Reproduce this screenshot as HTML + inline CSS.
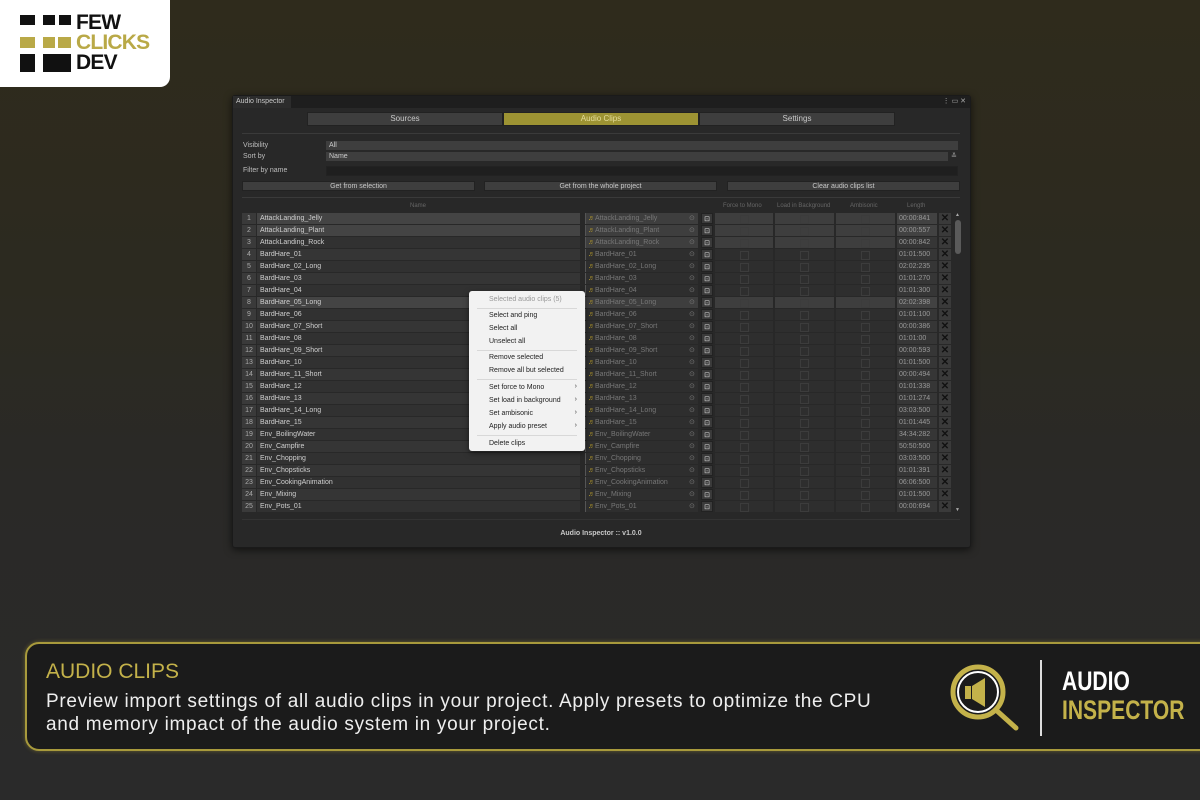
<!DOCTYPE html>
<html><head><meta charset="utf-8">
<style>
*{margin:0;padding:0;box-sizing:border-box}
body{width:1200px;height:800px;overflow:hidden;position:relative;font-family:"Liberation Sans",sans-serif;
background:linear-gradient(180deg,#2f2b1c 0%,#2c2a20 35%,#2a2927 60%,#2a2a2a 100%);}
.abs{position:absolute}
.logo{left:0;top:0;width:170px;height:87px;background:#fff;border-bottom-right-radius:10px}
.win{left:232px;top:95px;width:739px;height:453px;background:#282828;border:1px solid #1a1a1a;border-radius:3px;box-shadow:0 2px 8px rgba(0,0,0,.6)}
.t{font-size:7px;color:#bdbdbd;white-space:nowrap}
.btn{background:#3e3e3e;border:1px solid #222;text-align:center;font-size:7px;color:#c8c8c8;line-height:9px}
.r{position:absolute;left:242px;width:710px;height:11px}
.r div{position:absolute;top:0;height:11px;font-size:7px;line-height:11px;white-space:nowrap;overflow:hidden}
.i{left:0;width:14px;background:#3a3a3a;text-align:center;color:#aaa}
.n{left:15px;width:323px;background:#313131;padding-left:3px;color:#cfcfcf}
.a{left:343px;width:113px;background:#2e2e2e;border-left:1px solid #555;color:#777;padding-left:2px}
.a b{color:#b59a2a;font-weight:normal}
.o{left:447px;width:8px;color:#777}
.p{left:459px;width:12px;background:#3a3a3a;border:1px solid #222;color:#ddd;text-align:center}
.f1,.f2,.f3{background:#2e2e2e}
.f1{left:473px;width:58px}.f2{left:533px;width:59px}.f3{left:594px;width:59px}
.f1:after,.f2:after,.f3:after{content:"";position:absolute;left:25px;top:2px;width:7px;height:7px;border:1px solid #3c3c3c}
.l{left:655px;width:40px;background:#363636;color:#999;padding-left:2px}
.x{left:697px;width:12px;background:#3a3a3a;color:#111;text-align:center;font-size:10px!important;font-weight:bold}
.s .n{background:#444}.s .l{background:#424242}
.h .a,.h .f1,.h .f2,.h .f3{background:#3e3e3e}
.e .n{background:#353535}
.menu{left:469px;top:291px;width:116px;height:160px;background:#f2f2f2;border-radius:3px;box-shadow:0 2px 6px rgba(0,0,0,.5)}
.mi{position:absolute;left:20px;font-size:7px;color:#222;white-space:nowrap}
.sep{position:absolute;left:8px;right:8px;height:1px;background:#d8d8d8}
.arr{position:absolute;right:8px;font-size:7px;color:#444}
.lt{position:absolute;left:76px;font:bold 21px/20px 'Liberation Sans',sans-serif;letter-spacing:-0.8px}
</style></head><body>

<div class="abs logo">
  <div class="abs" style="left:20px;top:15px;width:15px;height:10px;background:#111"></div>
  <div class="abs" style="left:43px;top:15px;width:12px;height:10px;background:#111"></div>
  <div class="abs" style="left:59px;top:15px;width:12px;height:10px;background:#111"></div>
  <div class="abs" style="left:20px;top:37px;width:15px;height:11px;background:#b9a947"></div>
  <div class="abs" style="left:43px;top:37px;width:12px;height:11px;background:#b9a947"></div>
  <div class="abs" style="left:58px;top:37px;width:13px;height:11px;background:#b9a947"></div>
  <div class="abs" style="left:20px;top:54px;width:15px;height:18px;background:#111"></div>
  <div class="abs" style="left:43px;top:54px;width:28px;height:18px;background:#111"></div>
  <div class="lt" style="top:13px;color:#111">FEW</div>
  <div class="lt" style="top:33px;color:#b9a947">CLICKS</div>
  <div class="lt" style="top:53px;color:#111">DEV</div>
</div>

<div class="abs win">
  <div class="abs" style="left:0;top:0;width:737px;height:12px;background:#1e1e1e"></div>
  <div class="abs t" style="left:0;top:0;width:58px;height:12px;background:#2c2c2c;line-height:12px;padding-left:3px;color:#c8c8c8">Audio Inspector</div>
  <div class="abs t" style="right:4px;top:0;line-height:11px;color:#aaa">⋮ ▭ ✕</div>
</div>
<div class="abs btn" style="left:307px;top:112px;width:196px;height:14px;line-height:12px;font-size:8px">Sources</div>
<div class="abs btn" style="left:503px;top:112px;width:196px;height:14px;line-height:12px;font-size:8px;background:#9d9333;color:#e4dc9a">Audio Clips</div>
<div class="abs btn" style="left:699px;top:112px;width:196px;height:14px;line-height:12px;font-size:8px">Settings</div>
<div class="abs" style="left:242px;top:133px;width:718px;height:1px;background:#3a3a3a"></div>
<div class="abs t" style="left:243px;top:142px">Visibility</div>
<div class="abs t" style="left:243px;top:153px">Sort by</div>
<div class="abs t" style="left:243px;top:167px">Filter by name</div>
<div class="abs" style="left:326px;top:141px;width:632px;height:9px;background:#3e3e3e"></div>
<div class="abs t" style="left:329px;top:142px;color:#ccc">All</div>
<div class="abs" style="left:326px;top:152px;width:622px;height:9px;background:#3e3e3e"></div>
<div class="abs t" style="left:329px;top:153px;color:#ccc">Name</div>
<div class="abs t" style="left:951px;top:152px;color:#aaa">≚</div>
<div class="abs" style="left:326px;top:166px;width:632px;height:10px;background:#1f1f1f;border:1px solid #222"></div>
<div class="abs btn" style="left:242px;top:181px;width:233px;height:10px">Get from selection</div>
<div class="abs btn" style="left:484px;top:181px;width:233px;height:10px">Get from the whole project</div>
<div class="abs btn" style="left:727px;top:181px;width:233px;height:10px">Clear audio clips list</div>
<div class="abs" style="left:242px;top:197px;width:718px;height:1px;background:#3a3a3a"></div>
<div class="abs" style="left:410px;top:203px;font-size:6px;color:#666">Name</div>
<div class="abs" style="left:723px;top:203px;font-size:6px;color:#666">Force to Mono</div>
<div class="abs" style="left:777px;top:203px;font-size:6px;color:#666">Load in Background</div>
<div class="abs" style="left:850px;top:203px;font-size:6px;color:#666">Ambisonic</div>
<div class="abs" style="left:907px;top:203px;font-size:6px;color:#666">Length</div>
<div class="abs" style="left:955px;top:220px;width:6px;height:34px;background:#5a5a5a;border-radius:3px"></div>
<div class="abs" style="left:955px;top:212px;font-size:5px;color:#aaa">▲</div>
<div class="abs" style="left:955px;top:507px;font-size:5px;color:#aaa">▼</div>

<div class="r s h" style="top:213px"><div class="i">1</div><div class="n">AttackLanding_Jelly</div><div class="a"><b>♬</b>AttackLanding_Jelly</div><div class="o">⊙</div><div class="p">⊡</div><div class="f1"></div><div class="f2"></div><div class="f3"></div><div class="l">00:00:841</div><div class="x">✕</div></div>
<div class="r s h" style="top:225px"><div class="i">2</div><div class="n">AttackLanding_Plant</div><div class="a"><b>♬</b>AttackLanding_Plant</div><div class="o">⊙</div><div class="p">⊡</div><div class="f1"></div><div class="f2"></div><div class="f3"></div><div class="l">00:00:557</div><div class="x">✕</div></div>
<div class="r h" style="top:237px"><div class="i">3</div><div class="n">AttackLanding_Rock</div><div class="a"><b>♬</b>AttackLanding_Rock</div><div class="o">⊙</div><div class="p">⊡</div><div class="f1"></div><div class="f2"></div><div class="f3"></div><div class="l">00:00:842</div><div class="x">✕</div></div>
<div class="r e" style="top:249px"><div class="i">4</div><div class="n">BardHare_01</div><div class="a"><b>♬</b>BardHare_01</div><div class="o">⊙</div><div class="p">⊡</div><div class="f1"></div><div class="f2"></div><div class="f3"></div><div class="l">01:01:500</div><div class="x">✕</div></div>
<div class="r" style="top:261px"><div class="i">5</div><div class="n">BardHare_02_Long</div><div class="a"><b>♬</b>BardHare_02_Long</div><div class="o">⊙</div><div class="p">⊡</div><div class="f1"></div><div class="f2"></div><div class="f3"></div><div class="l">02:02:235</div><div class="x">✕</div></div>
<div class="r e" style="top:273px"><div class="i">6</div><div class="n">BardHare_03</div><div class="a"><b>♬</b>BardHare_03</div><div class="o">⊙</div><div class="p">⊡</div><div class="f1"></div><div class="f2"></div><div class="f3"></div><div class="l">01:01:270</div><div class="x">✕</div></div>
<div class="r" style="top:285px"><div class="i">7</div><div class="n">BardHare_04</div><div class="a"><b>♬</b>BardHare_04</div><div class="o">⊙</div><div class="p">⊡</div><div class="f1"></div><div class="f2"></div><div class="f3"></div><div class="l">01:01:300</div><div class="x">✕</div></div>
<div class="r s h" style="top:297px"><div class="i">8</div><div class="n">BardHare_05_Long</div><div class="a"><b>♬</b>BardHare_05_Long</div><div class="o">⊙</div><div class="p">⊡</div><div class="f1"></div><div class="f2"></div><div class="f3"></div><div class="l">02:02:398</div><div class="x">✕</div></div>
<div class="r" style="top:309px"><div class="i">9</div><div class="n">BardHare_06</div><div class="a"><b>♬</b>BardHare_06</div><div class="o">⊙</div><div class="p">⊡</div><div class="f1"></div><div class="f2"></div><div class="f3"></div><div class="l">01:01:100</div><div class="x">✕</div></div>
<div class="r e" style="top:321px"><div class="i">10</div><div class="n">BardHare_07_Short</div><div class="a"><b>♬</b>BardHare_07_Short</div><div class="o">⊙</div><div class="p">⊡</div><div class="f1"></div><div class="f2"></div><div class="f3"></div><div class="l">00:00:386</div><div class="x">✕</div></div>
<div class="r" style="top:333px"><div class="i">11</div><div class="n">BardHare_08</div><div class="a"><b>♬</b>BardHare_08</div><div class="o">⊙</div><div class="p">⊡</div><div class="f1"></div><div class="f2"></div><div class="f3"></div><div class="l">01:01:00</div><div class="x">✕</div></div>
<div class="r e" style="top:345px"><div class="i">12</div><div class="n">BardHare_09_Short</div><div class="a"><b>♬</b>BardHare_09_Short</div><div class="o">⊙</div><div class="p">⊡</div><div class="f1"></div><div class="f2"></div><div class="f3"></div><div class="l">00:00:593</div><div class="x">✕</div></div>
<div class="r" style="top:357px"><div class="i">13</div><div class="n">BardHare_10</div><div class="a"><b>♬</b>BardHare_10</div><div class="o">⊙</div><div class="p">⊡</div><div class="f1"></div><div class="f2"></div><div class="f3"></div><div class="l">01:01:500</div><div class="x">✕</div></div>
<div class="r e" style="top:369px"><div class="i">14</div><div class="n">BardHare_11_Short</div><div class="a"><b>♬</b>BardHare_11_Short</div><div class="o">⊙</div><div class="p">⊡</div><div class="f1"></div><div class="f2"></div><div class="f3"></div><div class="l">00:00:494</div><div class="x">✕</div></div>
<div class="r" style="top:381px"><div class="i">15</div><div class="n">BardHare_12</div><div class="a"><b>♬</b>BardHare_12</div><div class="o">⊙</div><div class="p">⊡</div><div class="f1"></div><div class="f2"></div><div class="f3"></div><div class="l">01:01:338</div><div class="x">✕</div></div>
<div class="r e" style="top:393px"><div class="i">16</div><div class="n">BardHare_13</div><div class="a"><b>♬</b>BardHare_13</div><div class="o">⊙</div><div class="p">⊡</div><div class="f1"></div><div class="f2"></div><div class="f3"></div><div class="l">01:01:274</div><div class="x">✕</div></div>
<div class="r" style="top:405px"><div class="i">17</div><div class="n">BardHare_14_Long</div><div class="a"><b>♬</b>BardHare_14_Long</div><div class="o">⊙</div><div class="p">⊡</div><div class="f1"></div><div class="f2"></div><div class="f3"></div><div class="l">03:03:500</div><div class="x">✕</div></div>
<div class="r e" style="top:417px"><div class="i">18</div><div class="n">BardHare_15</div><div class="a"><b>♬</b>BardHare_15</div><div class="o">⊙</div><div class="p">⊡</div><div class="f1"></div><div class="f2"></div><div class="f3"></div><div class="l">01:01:445</div><div class="x">✕</div></div>
<div class="r" style="top:429px"><div class="i">19</div><div class="n">Env_BoilingWater</div><div class="a"><b>♬</b>Env_BoilingWater</div><div class="o">⊙</div><div class="p">⊡</div><div class="f1"></div><div class="f2"></div><div class="f3"></div><div class="l">34:34:282</div><div class="x">✕</div></div>
<div class="r e" style="top:441px"><div class="i">20</div><div class="n">Env_Campfire</div><div class="a"><b>♬</b>Env_Campfire</div><div class="o">⊙</div><div class="p">⊡</div><div class="f1"></div><div class="f2"></div><div class="f3"></div><div class="l">50:50:500</div><div class="x">✕</div></div>
<div class="r" style="top:453px"><div class="i">21</div><div class="n">Env_Chopping</div><div class="a"><b>♬</b>Env_Chopping</div><div class="o">⊙</div><div class="p">⊡</div><div class="f1"></div><div class="f2"></div><div class="f3"></div><div class="l">03:03:500</div><div class="x">✕</div></div>
<div class="r e" style="top:465px"><div class="i">22</div><div class="n">Env_Chopsticks</div><div class="a"><b>♬</b>Env_Chopsticks</div><div class="o">⊙</div><div class="p">⊡</div><div class="f1"></div><div class="f2"></div><div class="f3"></div><div class="l">01:01:391</div><div class="x">✕</div></div>
<div class="r" style="top:477px"><div class="i">23</div><div class="n">Env_CookingAnimation</div><div class="a"><b>♬</b>Env_CookingAnimation</div><div class="o">⊙</div><div class="p">⊡</div><div class="f1"></div><div class="f2"></div><div class="f3"></div><div class="l">06:06:500</div><div class="x">✕</div></div>
<div class="r e" style="top:489px"><div class="i">24</div><div class="n">Env_Mixing</div><div class="a"><b>♬</b>Env_Mixing</div><div class="o">⊙</div><div class="p">⊡</div><div class="f1"></div><div class="f2"></div><div class="f3"></div><div class="l">01:01:500</div><div class="x">✕</div></div>
<div class="r" style="top:501px"><div class="i">25</div><div class="n">Env_Pots_01</div><div class="a"><b>♬</b>Env_Pots_01</div><div class="o">⊙</div><div class="p">⊡</div><div class="f1"></div><div class="f2"></div><div class="f3"></div><div class="l">00:00:694</div><div class="x">✕</div></div>

<div class="abs" style="left:242px;top:519px;width:718px;height:1px;background:#333"></div>
<div class="abs" style="left:0;width:1200px;top:530px;text-align:center;font-size:7px;font-weight:bold;color:#c8c8c8;padding-left:2px">Audio Inspector :: v1.0.0</div>

<div class="abs menu">
  <div class="mi" style="top:5px;color:#999">Selected audio clips (5)</div>
  <div class="sep" style="top:17px"></div>
  <div class="mi" style="top:21px">Select and ping</div>
  <div class="mi" style="top:34px">Select all</div>
  <div class="mi" style="top:47px">Unselect all</div>
  <div class="sep" style="top:59px"></div>
  <div class="mi" style="top:63px">Remove selected</div>
  <div class="mi" style="top:76px">Remove all but selected</div>
  <div class="sep" style="top:88px"></div>
  <div class="mi" style="top:93px">Set force to Mono</div><div class="arr" style="top:92px">›</div>
  <div class="mi" style="top:106px">Set load in background</div><div class="arr" style="top:105px">›</div>
  <div class="mi" style="top:119px">Set ambisonic</div><div class="arr" style="top:118px">›</div>
  <div class="mi" style="top:132px">Apply audio preset</div><div class="arr" style="top:131px">›</div>
  <div class="sep" style="top:144px"></div>
  <div class="mi" style="top:149px">Delete clips</div>
</div>

<div class="abs" style="left:25px;top:642px;width:1200px;height:109px;background:#1b1b1b;border:2px solid #a89a3c;border-radius:14px;box-shadow:0 0 4px rgba(200,180,60,.4)"></div>
<div class="abs" style="left:46px;top:660px;font-size:21px;color:#c4b24a">AUDIO CLIPS</div>
<div class="abs" style="left:46px;top:690px;font-size:19px;line-height:23px;color:#eee;white-space:nowrap;letter-spacing:0.7px">Preview import settings of all audio clips in your project. Apply presets to optimize the CPU<br>and memory impact of the audio system in your project.</div>
<svg class="abs" style="left:948px;top:662px" width="76" height="72" viewBox="0 0 76 72">
  <circle cx="30" cy="30" r="25" fill="none" stroke="#c4b24a" stroke-width="5"/>
  <circle cx="30" cy="30" r="20" fill="none" stroke="#fff" stroke-width="2"/>
  <line x1="48" y1="48" x2="68" y2="66" stroke="#c4b24a" stroke-width="5" stroke-linecap="round"/>
  <rect x="17" y="24" width="6" height="13" fill="#c4b24a"/>
  <path d="M24 24 L37 16 V45 L24 37Z" fill="#c4b24a"/>
</svg>
<div class="abs" style="left:1040px;top:660px;width:2px;height:76px;background:#ddd"></div>
<div class="abs" style="left:1062px;top:668px;font:bold 27px/26px 'Liberation Sans',sans-serif;color:#fff;transform:scaleX(.78);transform-origin:left">AUDIO</div>
<div class="abs" style="left:1062px;top:697px;font:bold 27px/26px 'Liberation Sans',sans-serif;color:#c4b24a;transform:scaleX(.78);transform-origin:left">INSPECTOR</div>
</body></html>
